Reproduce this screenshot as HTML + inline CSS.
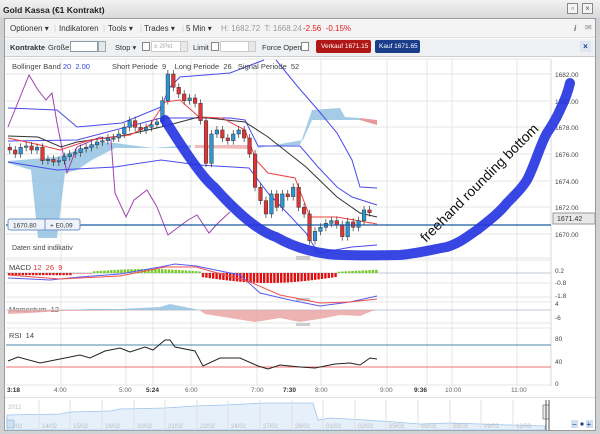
<!DOCTYPE html>
<html><head><meta charset="utf-8"><style>
*{margin:0;padding:0;box-sizing:border-box}
body{width:600px;height:434px;overflow:hidden;background:#cfd1d3;font-family:"Liberation Sans",sans-serif;position:relative}
.title{position:absolute;left:0;top:0;width:600px;height:18px;background:linear-gradient(#f2f2f2,#d9dadb);font-size:8.5px;font-weight:bold;color:#222;padding:5px 0 0 3px}
.btn{position:absolute;top:3px;width:11px;height:11px;border:1px solid #888;background:#f4f4f4;font-size:8px;line-height:9px;text-align:center;color:#555}
.panel{position:absolute;left:4px;top:18px;width:592px;height:413px;background:#fff;border:1px solid #9a9a9a}
.a{position:absolute;font-size:8px;color:#333;white-space:nowrap}
.inp{position:absolute;height:11px;border:1px solid #8a9aaa;background:#fff}
.sp{position:absolute;width:8px;height:11px;border:1px solid #9aa;background:#e8e8e8}
.cb{position:absolute;width:8px;height:9px;border:1px solid #888;background:#fff}
svg text{font-family:"Liberation Sans",sans-serif}
</style></head><body>
<div class="title">Gold Kassa (€1 Kontrakt)</div>
<div class="btn" style="left:567px">▫</div><div class="btn" style="left:582px">×</div>
<div class="panel">
 <div style="position:absolute;left:0;top:0;width:590px;height:19px;background:#f4f4f4;border-bottom:1px solid #ddd"></div>
 <div style="position:absolute;left:0;top:20px;width:590px;height:18px;background:#eef0f2;border-bottom:1px solid #ccc"></div>
</div>
<div class="a" style="top:24px;left:10px">Optionen ▾</div><div class="a" style="top:24px;left:54px;color:#ccc">|</div>
<div class="a" style="top:24px;left:59px">Indikatoren</div><div class="a" style="top:24px;left:103px;color:#ccc">|</div>
<div class="a" style="top:24px;left:108px">Tools ▾</div><div class="a" style="top:24px;left:140px;color:#ccc">|</div>
<div class="a" style="top:24px;left:144px">Trades ▾</div><div class="a" style="top:24px;left:182px;color:#ccc">|</div>
<div class="a" style="top:24px;left:186px">5 Min ▾</div>
<div class="a" style="top:24px;left:221px;color:#999">H: 1682.72&nbsp; T: 1668.24</div>
<div class="a" style="top:24px;left:303px;color:#e02020">-2.56&nbsp; -0.15%</div>
<div class="a" style="top:24px;left:574px;font-style:italic;font-weight:bold;color:#666">i</div>
<div class="a" style="top:23px;left:585px;color:#888">✉</div>
<div class="a" style="top:43px;left:10px;font-weight:bold;font-size:7.5px">Kontrakte</div>
<div class="a" style="top:43px;left:48px;font-size:7.5px">Größe</div>
<div class="inp" style="left:70px;top:41px;width:28px"></div><div class="sp" style="left:98px;top:41px"></div>
<div class="a" style="top:43px;left:115px;font-size:7.5px">Stop ▾</div>
<div class="cb" style="left:142px;top:42px"></div>
<div class="inp" style="left:151px;top:41px;width:30px;border-color:#ccc"></div><div class="a" style="top:43px;left:154px;font-size:6.5px;color:#aaa">± 2Pkt</div><div class="sp" style="left:180px;top:41px;border-color:#ccc"></div>
<div class="a" style="top:43px;left:193px;font-size:7.5px">Limit</div>
<div class="cb" style="left:211px;top:42px"></div>
<div class="inp" style="left:220px;top:41px;width:29px;border-color:#ccc"></div><div class="sp" style="left:248px;top:41px;border-color:#ccc"></div>
<div class="a" style="top:43px;left:262px;font-size:7.5px">Force Open</div>
<div class="cb" style="left:301px;top:42px"></div>
<div class="a" style="left:316px;top:40px;height:13px;width:55px;background:#b01818;border-radius:2px;color:#fff;font-size:6.5px;padding:3px 0 0 5px">Verkauf 1671.15</div>
<div class="a" style="left:375px;top:40px;height:13px;width:45px;background:#1a3d8a;border-radius:2px;color:#fff;font-size:6.5px;padding:3px 0 0 4px">Kauf 1671.65</div>
<div class="a" style="left:580px;top:41px;width:11px;height:11px;background:#dde6f2;color:#1a3d8a;font-weight:bold;text-align:center;line-height:11px">×</div>
<svg id="s" width="600" height="434" style="position:absolute;left:0;top:0">
 <g stroke="#e4e4e4" stroke-width="1">
  <line x1="6" y1="59" x2="551" y2="59"/><line x1="6" y1="258" x2="551" y2="258"/>
  <line x1="6" y1="101" x2="551" y2="101"/><line x1="6" y1="127" x2="551" y2="127"/><line x1="6" y1="154" x2="551" y2="154"/><line x1="6" y1="181" x2="551" y2="181"/><line x1="6" y1="207" x2="551" y2="207"/><line x1="6" y1="234" x2="551" y2="234"/><line x1="6" y1="74" x2="551" y2="74"/>
  <g id="vg"></g>
  <line x1="6" y1="260" x2="551" y2="260"/><line x1="6" y1="297" x2="551" y2="297"/>
  <line x1="6" y1="302" x2="551" y2="302"/><line x1="6" y1="323" x2="551" y2="323"/>
  <line x1="6" y1="328" x2="551" y2="328"/><line x1="6" y1="385" x2="551" y2="385"/>
  <line x1="6" y1="283" x2="551" y2="283"/>
 </g>
 <line x1="551" y1="59" x2="551" y2="386" stroke="#d8d8d8"/>
 <rect x="296" y="256" width="14" height="4" fill="#ccc"/><rect x="296" y="298" width="14" height="3" fill="#ccc"/><rect x="296" y="323" width="14" height="3" fill="#ccc"/>
 <polygon fill="#8fbfe0" opacity=".8" points="8,161 57,157 77,150 100,142 115,143 153,148 191,145 191,148 115,148 92,160 77,170 65,173 57,238 38,238 31,170 8,163"/>
 <polygon fill="#8fbfe0" opacity=".8" points="258,146 300,145 312,110 340,108 345,117 360,118 360,120 312,120 303,140 258,148"/>
 <polygon fill="#e89a9a" points="360,118 377,120 377,125 360,120"/>
 <polygon fill="#eaa" opacity=".8" points="195,145 249,145 249,149 195,148"/>
 <g fill="none" stroke-width="1">
  <polyline stroke="#a040b0" points="8,127 29,75 38,90 46,100 52,93 57,123 67,173 77,147 100,137 111,140 115,193 126,217 134,200 147,190 157,207 168,235 188,220 197,215 209,233 218,223 230,212"/>
  <polyline stroke="#4a4aee" points="8,108 57,110 77,127 122,123 161,107 170,87 180,77 230,73 264,60"/>
  <polyline stroke="#4a4aee" points="276,60 298,87 318,110 337,133 352,160 360,187 377,188"/>
  <polyline stroke="#4a4aee" points="8,141 77,140 161,118 230,118 245,120 258,146 300,146 318,167 337,187 352,197 377,205"/>
  <polyline stroke="#4a4aee" points="8,162 57,170 115,167 161,160 199,165 249,168 268,193 291,217 306,233 318,253 352,247 377,245"/>
  <polyline stroke="#333" points="8,136 38,137 61,147 77,142 126,135 161,127 199,117 245,122 268,137 306,167 337,197 360,213 377,217"/>
  <polyline stroke="#f04040" points="8,138 40,145 60,150 90,140 130,135 150,125 165,102 180,100 199,117 222,118 245,130 256,160 268,173 295,178 310,217 337,217 377,224"/>
 </g>
 <g id="cd"></g>
 <line x1="6" y1="225" x2="551" y2="225" stroke="#1a5aa0" stroke-width="1.3"/>
 <rect x="8" y="219" width="72" height="11" rx="2" fill="#eef3fa" stroke="#6c93c8"/><line x1="45" y1="219" x2="45" y2="230" stroke="#6c93c8"/>
 <text x="13" y="227.5" font-size="6.5" fill="#333">1670.80</text><text x="50" y="227.5" font-size="6.5" fill="#333">+ E0,09</text>
 <rect x="553" y="213" width="42" height="11" fill="#e8e8e8" stroke="#999"/><text x="557" y="221" font-size="7" fill="#333">1671.42</text>
 <g font-size="6.5" fill="#444">
  <text x="555" y="77">1682.00</text><text x="555" y="104">1680.00</text><text x="555" y="130">1678.00</text><text x="555" y="157">1676.00</text><text x="555" y="184">1674.00</text><text x="555" y="210">1672.00</text><text x="555" y="237">1670.00</text>
  <text x="555" y="273">0.2</text><text x="555" y="285">-0.8</text><text x="555" y="298">-1.8</text>
  <text x="555" y="306">4</text><text x="555" y="320">-6</text>
  <text x="555" y="341">80</text><text x="555" y="364">40</text><text x="555" y="386">0</text>
 </g>
 <g font-size="7.5" fill="#444">
  <text x="12" y="69">Bollinger Band <tspan fill="#3344dd">20&nbsp; 2.00</tspan></text>
  <text x="112" y="69">Short Periode&nbsp; 9&nbsp;&nbsp;&nbsp; Long Periode&nbsp; 26&nbsp;&nbsp; Signal Periode&nbsp; 52</text>
  <text x="12" y="250" font-size="7">Daten sind indikativ</text>
  <text x="9" y="270">MACD <tspan fill="#e03030">12&nbsp; 26&nbsp; 9</tspan></text>
  <text x="9" y="312" fill="#555">Momentum&nbsp; 12</text>
  <text x="9" y="338">RSI&nbsp; 14</text>
 </g>
 <line x1="6" y1="273" x2="551" y2="273" stroke="#bcc8d6"/>
 <g id="mh"></g>
 <polyline fill="none" stroke="#5a5af0" points="8,278 30,279 50,280 80,277 120,274 160,267 175,264 196,266 240,275 260,293 290,300 320,306 350,302 377,296"/>
 <polyline fill="none" stroke="#f05050" points="8,275 60,279 120,276 165,267 196,267 250,282 280,295 320,303 350,302 377,299"/>
 <line x1="6" y1="310" x2="551" y2="310" stroke="#bcc8d6"/>
 <polygon fill="#8fbfe0" opacity=".8" points="8,310 70,310 90,309 120,309 160,307 170,304 185,307 199,310"/>
 <polygon fill="#e8a0a0" opacity=".8" points="8,310 8,314 30,313 60,311 199,310 205,314 230,318 255,322 280,318 300,322 325,318 340,315 360,316 372,311 377,310"/>
 <line x1="6" y1="345" x2="551" y2="345" stroke="#4a8aa8"/>
 <line x1="6" y1="367" x2="551" y2="367" stroke="#f07070"/>
 <polyline fill="none" stroke="#222" points="8,361 18,357 40,363 55,360 80,355 90,358 105,351 120,348 130,352 145,347 153,350 165,340 170,340 175,347 195,351 203,366 220,358 240,358 258,366 268,369 280,365 300,367 315,368 335,364 350,363 360,365 370,358 377,359"/>
 <g font-size="6.5" fill="#666">
  <text x="7" y="392" font-weight="bold" fill="#333">3:18</text><text x="54" y="392">4:00</text><text x="119" y="392">5:00</text><text x="146" y="392" font-weight="bold" fill="#333">5:24</text><text x="185" y="392">6:00</text><text x="251" y="392">7:00</text><text x="283" y="392" font-weight="bold" fill="#333">7:30</text><text x="315" y="392">8:00</text><text x="380" y="392">9:00</text><text x="414" y="392" font-weight="bold" fill="#333">9:36</text><text x="445" y="392">10:00</text><text x="511" y="392">11:00</text>
 </g>
 <rect x="5" y="397" width="590" height="1" fill="#e0e0e0"/>
 <polygon fill="#e6f0fb" stroke="#9cc4ec" stroke-width="0.8" points="7,430 7,415 60,414 70,412 110,411 120,409 165,408 195,406 225,405 265,403 290,403 313,403 318,420 330,418 365,420 395,422 420,424 450,423 480,424 510,425 545,426 545,430"/>
 <g stroke="#e0e0e0"><line x1="39" y1="400" x2="39" y2="430"/><line x1="70" y1="400" x2="70" y2="430"/><line x1="102" y1="400" x2="102" y2="430"/><line x1="134" y1="400" x2="134" y2="430"/><line x1="165" y1="400" x2="165" y2="430"/><line x1="197" y1="400" x2="197" y2="430"/><line x1="228" y1="400" x2="228" y2="430"/><line x1="260" y1="400" x2="260" y2="430"/><line x1="292" y1="400" x2="292" y2="430"/><line x1="323" y1="400" x2="323" y2="430"/><line x1="355" y1="400" x2="355" y2="430"/><line x1="386" y1="400" x2="386" y2="430"/><line x1="418" y1="400" x2="418" y2="430"/><line x1="450" y1="400" x2="450" y2="430"/><line x1="481" y1="400" x2="481" y2="430"/><line x1="513" y1="400" x2="513" y2="430"/></g>
 <g font-size="6" fill="#bbb"><text x="8" y="409">2012</text><text x="14" y="428">/02</text><text x="42" y="428">14/02</text><text x="73" y="428">15/02</text><text x="105" y="428">16/02</text><text x="137" y="428">20/02</text><text x="168" y="428">21/02</text><text x="200" y="428">22/02</text><text x="231" y="428">24/02</text><text x="263" y="428">27/02</text><text x="295" y="428">28/02</text><text x="326" y="428">01/03</text><text x="358" y="428">02/03</text><text x="389" y="428">05/03</text><text x="421" y="428">06/03</text><text x="453" y="428">08/03</text><text x="484" y="428">09/03</text><text x="516" y="428">12/03</text></g>
 <rect x="7" y="420" width="7" height="8" fill="#cfe0f3" stroke="#7fa6d4" stroke-width=".5"/>
 <rect x="543" y="405" width="6" height="14" fill="#eee" stroke="#555" stroke-width=".6"/><line x1="546" y1="400" x2="546" y2="430" stroke="#555"/><line x1="549" y1="400" x2="549" y2="430" stroke="#555"/>
 <rect x="571" y="420" width="7" height="8" fill="#cfe0f3"/><text x="572" y="427" font-size="8" fill="#1a3d8a">−</text><circle cx="582" cy="424" r="1.6" fill="#1a3d8a"/><rect x="586" y="420" width="7" height="8" fill="#cfe0f3"/><text x="586.5" y="427" font-size="8" fill="#1a3d8a">+</text>
 <path d="M165,120 C190,160 205,180 214,187 C230,205 255,230 276,237 C295,248 320,255 344,255 C370,256 385,255 400,255 C420,253 435,249 447,247 C460,243 468,236 477,230 C490,220 500,212 507,203 C515,195 522,188 527,180 C535,165 540,145 547,133 C553,124 557,117 560,110 C565,100 568,92 570,83" fill="none" stroke="#2233e0" stroke-width="10" stroke-linecap="round" opacity=".9"/>
 <text x="0" y="0" font-size="14" fill="#111" transform="translate(426,243) rotate(-45)">freehand rounding bottom</text>
</svg>
<script>
var cl=[1676.3,1676.0,1676.5,1676.6,1676.3,1676.5,1675.5,1675.6,1675.4,1675.5,1675.8,1676.0,1676.1,1676.4,1676.5,1676.7,1676.9,1677.0,1677.2,1677.2,1677.5,1678.0,1678.5,1678.0,1677.8,1678.0,1678.2,1678.4,1680.0,1682.0,1681.0,1680.5,1680.0,1680.2,1679.8,1678.5,1675.3,1677.5,1677.8,1677.2,1677.0,1677.5,1677.8,1677.2,1676.0,1673.5,1672.5,1671.5,1673.0,1672.0,1673.0,1672.8,1673.5,1672.0,1671.5,1669.5,1670.2,1670.5,1670.8,1671.0,1670.7,1669.8,1670.9,1670.5,1671.0,1671.8,1671.6];
function Y(p){return 74+(1682-p)*13.33}
var h='',prev=1676.5;
for(var i=0;i<cl.length;i++){var x=8+i*5.45,o=prev,c=cl[i],hi=Math.max(o,c)+0.3,lo=Math.min(o,c)-0.3;
var up=c>=o,t=Y(Math.max(o,c)),b=Y(Math.min(o,c)),hh=Math.max(1.2,b-t);
h+='<line x1="'+(x+1.8)+'" x2="'+(x+1.8)+'" y1="'+Y(hi)+'" y2="'+Y(lo)+'" stroke="#333" stroke-width=".7"/>';
h+='<rect x="'+x+'" y="'+t+'" width="3.6" height="'+hh+'" fill="'+(up?'#2a95d8':'#e03535')+'" stroke="#333" stroke-width=".5"/>';prev=c;}
document.getElementById('cd').innerHTML=h;
var v='',xs=[61,126,153,191,257,321,387,427,452,517];xs.forEach(function(x){v+='<line x1="'+x+'" y1="59" x2="'+x+'" y2="386"/>'});
document.getElementById('vg').innerHTML=v;
var m='';for(var x=8;x<378;x+=3.4){var val;
if(x<70)val=2.2;else if(x<90)val=0.5;else if(x<200)val=-1.5-2.5*Math.sin((x-90)/110*3.14);else if(x<335)val=4+6*Math.sin((x-200)/135*3.14);else val=-1.2-(x-335)/20;
m+='<rect x="'+x+'" y="'+(val>0?273:273+val)+'" width="2.4" height="'+Math.abs(val)+'" fill="'+(val>0?'#e01010':'#77cc22')+'"/>';}
document.getElementById('mh').innerHTML=m;
</script>
</body></html>
